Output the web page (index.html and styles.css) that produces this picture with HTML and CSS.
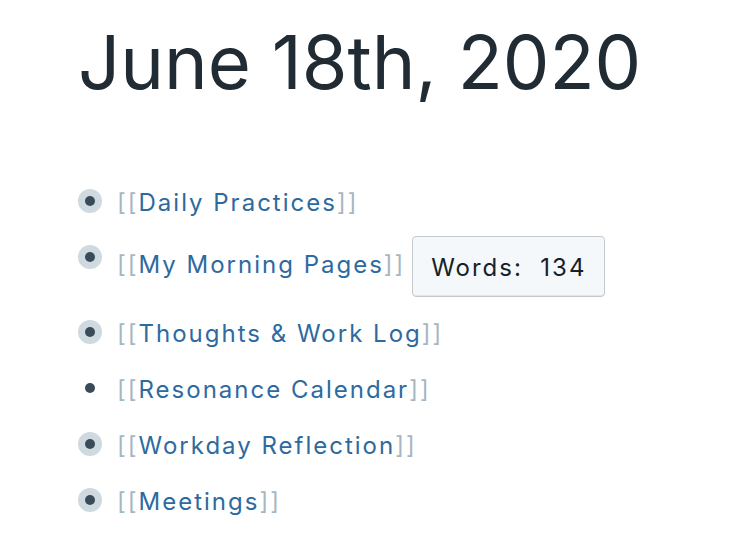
FILE: index.html
```html
<!DOCTYPE html>
<html lang="en">
<head>
    <meta charset="UTF-8">
    <meta name="viewport" content="width=device-width, initial-scale=1.0">
    <title>June 18th, 2020</title>
    <link rel="stylesheet" href="styles.css">
</head>
<body>

<div class="page">
    <h1 class="page-title">June 18th, 2020</h1>

    <div class="blocks">
        <div class="block">
            <span class="bullet has-children"><span class="dot"></span></span>
            <div class="block-text">
                <span class="bracket">[[</span><a class="page-link" href="#">Daily Practices</a><span class="bracket">]]</span>
            </div>
        </div>

        <div class="block">
            <span class="bullet has-children"><span class="dot"></span></span>
            <div class="block-text">
                <span class="bracket">[[</span><a class="page-link" href="#">My Morning Pages</a><span class="bracket">]]</span>
                <button type="button" class="word-count">Words:&nbsp; 134</button>
            </div>
        </div>

        <div class="block">
            <span class="bullet has-children"><span class="dot"></span></span>
            <div class="block-text">
                <span class="bracket">[[</span><a class="page-link" href="#">Thoughts &amp; Work Log</a><span class="bracket">]]</span>
            </div>
        </div>

        <div class="block">
            <span class="bullet"><span class="dot"></span></span>
            <div class="block-text">
                <span class="bracket">[[</span><a class="page-link" href="#">Resonance Calendar</a><span class="bracket">]]</span>
            </div>
        </div>

        <div class="block">
            <span class="bullet has-children"><span class="dot"></span></span>
            <div class="block-text">
                <span class="bracket">[[</span><a class="page-link" href="#">Workday Reflection</a><span class="bracket">]]</span>
            </div>
        </div>

        <div class="block">
            <span class="bullet has-children"><span class="dot"></span></span>
            <div class="block-text">
                <span class="bracket">[[</span><a class="page-link" href="#">Meetings</a><span class="bracket">]]</span>
            </div>
        </div>
    </div>
</div>

</body>
</html>
```

FILE: styles.css
```css
body {
    margin: 0;
    font-family: Inter, "Noto Sans", sans-serif;
    background-color: #fff;
    color: #202b33;
}

.page {
    padding: 18px 20px 0 78px;
}

.page-title {
    margin: 0;
    font-size: 74px;
    font-weight: 400;
    line-height: 1.21;
    color: #202b33;
}

.blocks {
    margin-top: 67px;
}

.block {
    display: flex;
    align-items: flex-start;
}

.bullet {
    flex: none;
    width: 24px;
    height: 24px;
    margin-top: 14px;
    margin-right: 15px;
    border-radius: 50%;
    display: flex;
    align-items: center;
    justify-content: center;
}

.bullet.has-children {
    background-color: #ced9e0;
}

.dot {
    width: 10px;
    height: 10px;
    border-radius: 50%;
    background-color: #394b59;
}

.block-text {
    padding: 10px 0;
    font-size: 24px;
    line-height: 36px;
    letter-spacing: 2px;
}

.bracket {
    color: #a7b6c2;
}

.page-link {
    color: #2d6aa0;
    text-decoration: none;
}

.word-count {
    margin: -5px 0 -1px -2px;
    padding: 13px 18px 10px;
    vertical-align: -3px;
    font-family: inherit;
    font-size: 24px;
    line-height: 36px;
    letter-spacing: 2px;
    color: #182026;
    background-color: #f5f8fa;
    border: 1px solid #c4c9ce;
    border-radius: 4px;
    box-shadow: inset 0 -1px 0 rgba(16, 22, 26, 0.08);
    cursor: pointer;
}
```
